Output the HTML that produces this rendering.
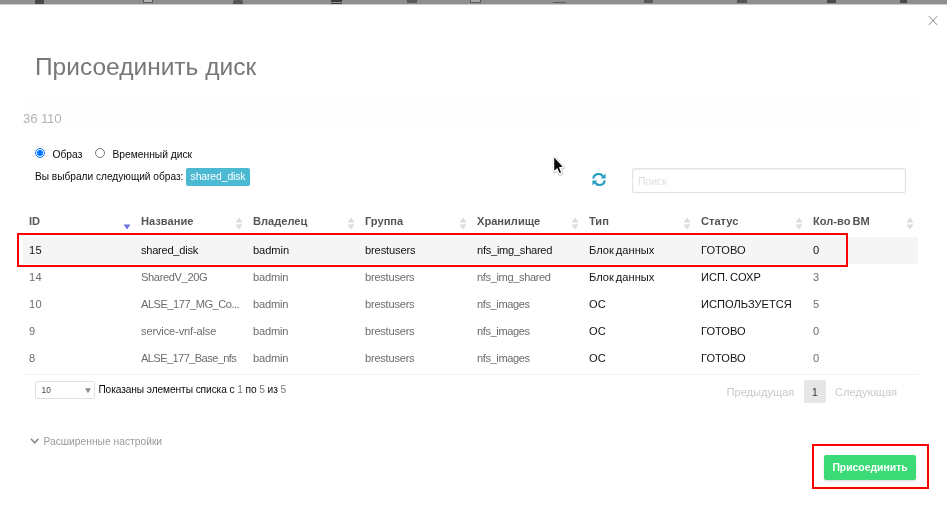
<!DOCTYPE html>
<html lang="ru">
<head>
<meta charset="utf-8">
<title>Присоединить диск</title>
<style>
*{box-sizing:border-box;margin:0;padding:0}
html,body{width:947px;height:512px;overflow:hidden;background:#fff}
body{position:relative;font-family:"Liberation Sans",sans-serif;font-size:10.2px;color:#222}
.abs{position:absolute;white-space:nowrap;line-height:1}
#topbar{position:absolute;left:0;top:0;width:947px;height:5px;background:linear-gradient(#8f8f8f 0,#8f8f8f 4px,#cdcdcd 4px,#cdcdcd 5px);overflow:hidden}
#topbar i{position:absolute;top:0;background:#4d4d4d;display:block}
#title{left:35px;top:53px;font-size:24.5px;color:#777;line-height:28px}
#band{position:absolute;left:23px;top:99px;width:895px;height:32px;background:#fefefe}
#num{left:23px;top:112px;font-size:13.2px;color:#b4b4b4;line-height:14px;letter-spacing:-0.15px}
.radio{position:absolute;width:10px;height:10px;border-radius:50%;background:#fff}
.radio.on{border:1px solid #0075ff}
.radio.on:after{content:"";position:absolute;left:1px;top:1px;width:6px;height:6px;border-radius:50%;background:#0075ff}
.radio.off{border:1px solid #767676}
.lbl{font-size:10.25px;color:#0a0a0a;line-height:12px}
#badge{position:absolute;left:186px;top:168px;width:64px;height:18px;background:#4cb9d3;border-radius:2px;color:#fff;font-size:10.4px;line-height:18px;text-align:center;letter-spacing:-0.1px}
#search{position:absolute;left:632px;top:168px;width:274px;height:25px;border:1px solid #e2e2e2;border-radius:2px;box-shadow:inset 0 1px 2px rgba(0,0,0,.07),0 0 2px rgba(0,0,0,.05);background:#fff}
#search span{position:absolute;left:5px;top:7px;font-size:10.4px;color:#dedede;line-height:12px}
table{position:absolute;left:23px;top:209px;width:895px;border-collapse:collapse;table-layout:fixed}
th{height:28px;text-align:left;font-weight:bold;font-size:11.1px;color:#555;padding:0 0 5px 6px;position:relative;vertical-align:middle;white-space:nowrap;word-spacing:-1px}
td{height:27px;font-size:11.1px;color:#6c6c6c;padding:0 0 1px 6px;vertical-align:middle;white-space:nowrap;overflow:hidden}
tr.sel td{background:#f5f5f5;color:#111}
td.cy{color:#111;word-spacing:-1px}
th svg{position:absolute;right:4px;top:8px}
#tline{position:absolute;left:23px;top:374px;width:895px;height:1px;background:#f2f2f2}
.red{position:absolute;border:2px solid #fd0000}
#sel{position:absolute;left:35px;top:381px;width:60px;height:18px;border:1px solid #e0e0e0;border-radius:2px;background:#fff}
#sel span{position:absolute;left:5.5px;top:3px;font-size:8.4px;line-height:10px;color:#444}
#sel svg{position:absolute;right:2.6px;top:5.6px}
#info{left:98.4px;top:384px;font-size:10.2px;line-height:12px;color:#0a0a0a;letter-spacing:-0.1px}
#info b{font-weight:normal;color:#777}
.pg{font-size:11.1px;color:#cacaca;line-height:14px}
#p1{position:absolute;left:804px;top:380px;width:22px;height:23px;background:#e6e6e6;border-radius:2px;color:#333;font-size:11.1px;line-height:24.5px;text-align:center;letter-spacing:0.3px}
#adv{left:43.5px;top:436px;font-size:10.28px;color:#999;line-height:12px}
#btn{position:absolute;left:824px;top:455px;width:92px;height:25px;background:#3adb76;border-radius:2px;color:#fff;font-weight:bold;font-size:10.4px;line-height:25px;text-align:center;box-shadow:0 1px 2px rgba(0,0,0,.15)}
</style>
</head>
<body><div id="wrap" style="position:absolute;left:0;top:0;width:947px;height:512px;will-change:transform">
<div id="topbar">
<i style="left:35px;width:9px;height:3.5px;background:#4a4a4a"></i>
<i style="left:143px;width:10px;height:3px;background:#b4b4b4;border:1px solid #5a5a5a;border-top:0"></i>
<i style="left:233px;width:10px;height:3.5px;background:#555;border-radius:2px 2px 0 0"></i>
<i style="left:331px;width:11px;height:1.5px;background:#3c3c3c"></i>
<i style="left:331px;top:3px;width:11px;height:1px;background:#3c3c3c"></i>
<i style="left:407px;width:10px;height:2.5px;background:#5a5a5a"></i>
<i style="left:470px;width:11px;height:3px;background:#a8a8a8;border:1px solid #5a5a5a;border-top:0"></i>
<i style="left:553px;top:2px;width:13px;height:1.3px;background:#5e5e5e"></i>
<i style="left:644px;width:9px;height:3px;background:#5a5a5a"></i>
<i style="left:737px;width:10px;height:3px;background:#555"></i>
<i style="left:827px;width:9px;height:3.3px;background:#4a4a4a"></i>
<i style="left:900px;width:7px;height:3.3px;background:#4a4a4a"></i>
</div>
<svg class="abs" style="left:928px;top:15px" width="11" height="11" viewBox="0 0 11 11"><path d="M1 1.2 L9.2 9.9 M9.2 1.2 L1 9.9" stroke="#858585" stroke-width="1" fill="none"/></svg>
<div id="title" class="abs">Присоединить диск</div>
<div id="band"></div>
<div id="num" class="abs">36 110</div>

<div class="radio on" style="left:35px;top:148px"></div>
<div class="abs lbl" style="left:52.5px;top:149px">Образ</div>
<div class="radio off" style="left:95px;top:148px"></div>
<div class="abs lbl" style="left:112.5px;top:149px">Временный диск</div>
<div class="abs lbl" style="left:35px;top:171px;font-size:10.15px">Вы выбрали следующий образ:</div>
<div id="badge">shared_disk</div>

<svg class="abs" style="left:548px;top:150px" width="24" height="30" viewBox="548 150 24 30"><path d="M554.2 157.4 L554.2 170.8 L557.2 168 L559.6 173.1 L561.1 172.4 L558.9 167.2 L562.6 166.8 Z" fill="none" stroke="rgba(0,0,0,.16)" stroke-width="4" stroke-linejoin="round" transform="translate(0.4,0.8)"/><path d="M554.2 157.4 L554.2 170.8 L557.2 168 L559.6 173.1 L561.1 172.4 L558.9 167.2 L562.6 166.8 Z" fill="#0a0a0a" stroke="#fff" stroke-width="2.4" stroke-linejoin="round" paint-order="stroke"/></svg>

<svg class="abs" style="left:592px;top:173px" width="14" height="13" viewBox="0 0 14 13"><g fill="none" stroke="#2a9fc4" stroke-width="2.2"><path d="M1.3 5.6 A5.2 5.2 0 0 1 11 3.6"/><path d="M12.7 7.4 A5.2 5.2 0 0 1 3 9.4"/></g><path d="M13.6 0.4 L13.6 5.4 L8.6 5.4 Z M0.4 12.6 L0.4 7.6 L5.4 7.6 Z" fill="#2a9fc4"/></svg>
<div id="search"><span>Поиск</span></div>

<table>
<colgroup><col style="width:112px"><col style="width:112px"><col style="width:112px"><col style="width:112px"><col style="width:112px"><col style="width:112px"><col style="width:112px"><col style="width:111px"></colgroup>
<thead><tr>
<th>ID<svg width="8" height="14" viewBox="0 0 8 14"><path d="M0.5 7.5 L7.5 7.5 L4 12.5 Z" fill="#6b73e0"/></svg></th>
<th>Название<svg width="8" height="14" viewBox="0 0 8 14"><path d="M0.5 5.5 L7.5 5.5 L4 0.5 Z M0.5 7.5 L7.5 7.5 L4 12.5 Z" fill="#dcdcdc"/></svg></th>
<th>Владелец<svg width="8" height="14" viewBox="0 0 8 14"><path d="M0.5 5.5 L7.5 5.5 L4 0.5 Z M0.5 7.5 L7.5 7.5 L4 12.5 Z" fill="#dcdcdc"/></svg></th>
<th>Группа<svg width="8" height="14" viewBox="0 0 8 14"><path d="M0.5 5.5 L7.5 5.5 L4 0.5 Z M0.5 7.5 L7.5 7.5 L4 12.5 Z" fill="#dcdcdc"/></svg></th>
<th>Хранилище<svg width="8" height="14" viewBox="0 0 8 14"><path d="M0.5 5.5 L7.5 5.5 L4 0.5 Z M0.5 7.5 L7.5 7.5 L4 12.5 Z" fill="#dcdcdc"/></svg></th>
<th>Тип<svg width="8" height="14" viewBox="0 0 8 14"><path d="M0.5 5.5 L7.5 5.5 L4 0.5 Z M0.5 7.5 L7.5 7.5 L4 12.5 Z" fill="#dcdcdc"/></svg></th>
<th>Статус<svg width="8" height="14" viewBox="0 0 8 14"><path d="M0.5 5.5 L7.5 5.5 L4 0.5 Z M0.5 7.5 L7.5 7.5 L4 12.5 Z" fill="#dcdcdc"/></svg></th>
<th>Кол-во ВМ<svg width="8" height="14" viewBox="0 0 8 14"><path d="M0.5 5.5 L7.5 5.5 L4 0.5 Z M0.5 7.5 L7.5 7.5 L4 12.5 Z" fill="#dcdcdc"/></svg></th>
</tr></thead>
<tbody>
<tr class="sel"><td style="letter-spacing:0.29px">15</td><td style="letter-spacing:-0.26px">shared_disk</td><td style="letter-spacing:-0.05px">badmin</td><td style="letter-spacing:-0.13px">brestusers</td><td style="letter-spacing:-0.27px">nfs_img_shared</td><td class="cy">Блок данных</td><td class="cy">ГОТОВО</td><td style="letter-spacing:0.3px">0</td></tr>
<tr><td style="letter-spacing:0.29px">14</td><td style="letter-spacing:-0.37px">SharedV_20G</td><td style="letter-spacing:-0.19px">badmin</td><td style="letter-spacing:-0.24px">brestusers</td><td style="letter-spacing:-0.38px">nfs_img_shared</td><td class="cy">Блок данных</td><td class="cy">ИСП. СОХР</td><td style="letter-spacing:0.3px">3</td></tr>
<tr><td style="letter-spacing:0.29px">10</td><td style="letter-spacing:-0.5px">ALSE_177_MG_Co...</td><td style="letter-spacing:-0.19px">badmin</td><td style="letter-spacing:-0.24px">brestusers</td><td style="letter-spacing:-0.41px">nfs_images</td><td class="cy">ОС</td><td class="cy">ИСПОЛЬЗУЕТСЯ</td><td style="letter-spacing:0.3px">5</td></tr>
<tr><td style="letter-spacing:0.3px">9</td><td style="letter-spacing:-0.15px">service-vnf-alse</td><td style="letter-spacing:-0.19px">badmin</td><td style="letter-spacing:-0.24px">brestusers</td><td style="letter-spacing:-0.41px">nfs_images</td><td class="cy">ОС</td><td class="cy">ГОТОВО</td><td style="letter-spacing:0.3px">0</td></tr>
<tr><td style="letter-spacing:0.3px">8</td><td style="letter-spacing:-0.6px">ALSE_177_Base_nfs</td><td style="letter-spacing:-0.19px">badmin</td><td style="letter-spacing:-0.24px">brestusers</td><td style="letter-spacing:-0.41px">nfs_images</td><td class="cy">ОС</td><td class="cy">ГОТОВО</td><td style="letter-spacing:0.3px">0</td></tr>
</tbody>
</table>
<div id="tline"></div>
<div class="red" style="left:17px;top:233px;width:831px;height:34px"></div>

<div id="sel"><span>10</span><svg width="6" height="5.5" viewBox="0 0 7 6"><path d="M0 0 L7 0 L3.5 6 Z" fill="#8e8e8e"/></svg></div>
<div id="info" class="abs">Показаны элементы списка с <b>1</b> по <b>5</b> из <b>5</b></div>
<div class="abs pg" style="left:726.5px;top:385px">Предыдущая</div>
<div id="p1">1</div>
<div class="abs pg" style="left:835px;top:385px">Следующая</div>

<svg class="abs" style="left:29px;top:437px" width="11" height="9" viewBox="0 0 11 9"><path d="M1.9 1.8 L5.7 5.9 L9.5 1.8" stroke="#8c8c8c" stroke-width="1.6" fill="none"/></svg>
<div id="adv" class="abs">Расширенные настройки</div>

<div class="red" style="left:812px;top:444px;width:117px;height:45px"></div>
<div id="btn">Присоединить</div>
</div></body>
</html>
